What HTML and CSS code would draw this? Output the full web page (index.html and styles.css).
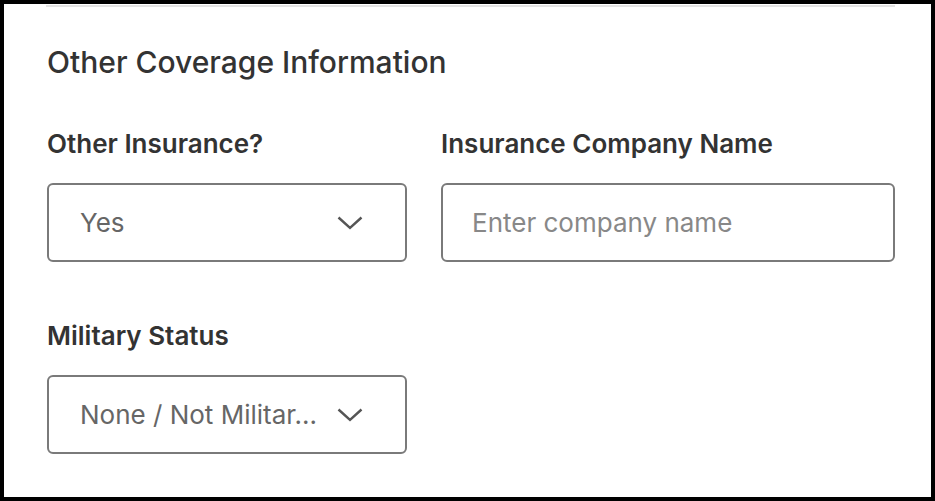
FILE: index.html
```html
<!DOCTYPE html>
<html lang="en">
<head>
  <meta charset="UTF-8">
  <meta name="viewport" content="width=device-width, initial-scale=1.0">
  <title>Other Coverage Information</title>
  <link rel="stylesheet" href="styles.css">
</head>
<body>
  <div class="frame">
    <div class="divider"></div>
    <h2 class="section-title">Other Coverage Information</h2>
    <div class="form-grid">
      <div class="field">
        <label class="field-label">Other Insurance?</label>
        <div class="select">
          <span class="select-value">Yes</span>
          <svg class="chevron" width="26" height="14" viewBox="0 0 26 14"><path d="M1.5 1.5 L13 12 L24.5 1.5" fill="none" stroke="#555" stroke-width="2.4"/></svg>
        </div>
      </div>
      <div class="field">
        <label class="field-label">Insurance Company Name</label>
        <input class="text-input" type="text" placeholder="Enter company name">
      </div>
      <div class="field">
        <label class="field-label">Military Status</label>
        <div class="select">
          <span class="select-value">None / Not Militar...</span>
          <svg class="chevron" width="26" height="14" viewBox="0 0 26 14"><path d="M1.5 1.5 L13 12 L24.5 1.5" fill="none" stroke="#555" stroke-width="2.4"/></svg>
        </div>
      </div>
    </div>
  </div>
</body>
</html>
```

FILE: styles.css
```css
body {
  margin: 0;
  font-family: Inter, "Liberation Sans", sans-serif;
  background: #fff;
}
.frame {
  width: 935px;
  height: 501px;
  box-sizing: border-box;
  border: 4px solid #000;
  padding: 1px 36px 0 43px;
}
.divider {
  height: 2px;
  background-color: #e3e3e3;
  margin-left: -1px;
}
.section-title {
  margin: 37px 0 0;
  font-size: 30px;
  font-weight: 500;
  color: #333;
  line-height: 36px;
}
.form-grid {
  display: grid;
  grid-template-columns: 360px 454px;
  column-gap: 34px;
  row-gap: 60px;
  margin-top: 50px;
}
.field {
  display: flex;
  flex-direction: column;
}
.field-label {
  font-size: 26px;
  font-weight: 600;
  color: #333;
  line-height: 28px;
  margin-bottom: 25px;
}
.select, .text-input {
  height: 79px;
  box-sizing: border-box;
  border: 2px solid #7a7a7a;
  border-radius: 6px;
  background: #fff;
}
.select {
  display: flex;
  align-items: center;
  padding: 0 42px 0 31px;
  gap: 14px;
}
.select-value {
  flex: 1;
  font-size: 26px;
  color: #666;
  white-space: nowrap;
}
.chevron {
  flex: none;
}
.text-input {
  width: 100%;
  padding: 0 29px;
  font-family: inherit;
  font-size: 26px;
  color: #333;
  outline: none;
}
.text-input::placeholder {
  color: #888;
}
```
